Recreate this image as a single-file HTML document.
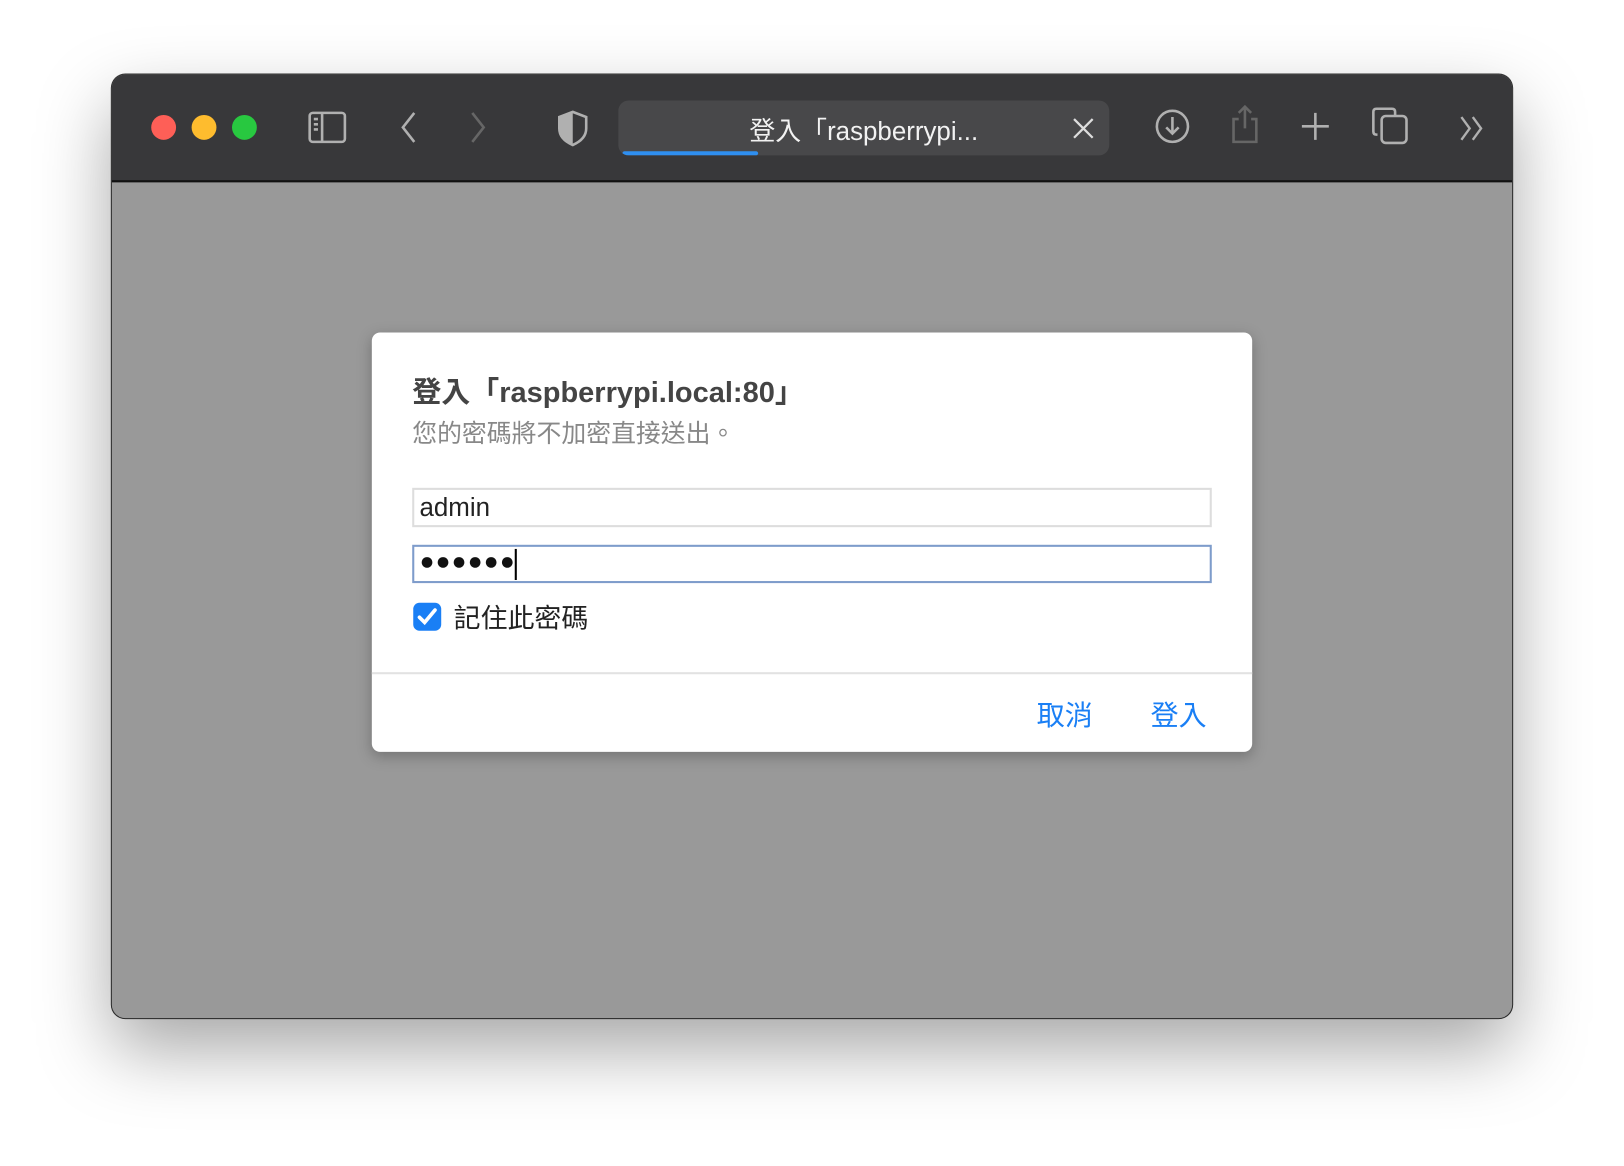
<!DOCTYPE html>
<html><head><meta charset="utf-8"><style>
html,body{margin:0;padding:0;width:1624px;height:1166px;overflow:hidden;background:#fff;}
#w{position:absolute;left:0;top:0;width:1568px;height:1126px;transform:scale(1.03571);transform-origin:0 0;font-family:"Liberation Sans","Noto Sans CJK TC",sans-serif;}
.win{position:absolute;left:108px;top:72px;width:1352px;height:911px;border-radius:13px;background:#999;overflow:hidden;box-shadow:0 30px 70px rgba(0,0,0,.35),0 0 0 1px #333;}
.tb{position:absolute;left:0;top:0;width:100%;height:102px;background:#38383a;border-bottom:2px solid #111;}
.dot{position:absolute;top:39px;width:24px;height:24px;border-radius:50%;}
.abs{position:absolute;}
.dlg{position:absolute;left:251px;top:249px;width:850px;height:405px;background:#fff;border-radius:8px;box-shadow:0 4px 14px rgba(0,0,0,.25);}
.inp{position:absolute;left:39px;width:768px;background:#fff;}
</style></head><body><div id="w">
<div class="win">
<div class="tb">
<div class="dot" style="left:38px;background:#fe5f57"></div>
<div class="dot" style="left:77px;background:#febc2e"></div>
<div class="dot" style="left:116px;background:#28c840"></div>
<svg class="abs" style="left:188px;top:34px" width="40" height="34" viewBox="0 0 40 34" fill="none" stroke="#b0b0b0" stroke-width="2.5"><rect x="3" y="3" width="34" height="28" rx="3"/><line x1="15" y1="3" x2="15" y2="31"/><line x1="7" y1="9" x2="11" y2="9"/><line x1="7" y1="14" x2="11" y2="14"/><line x1="7" y1="19" x2="11" y2="19"/></svg>
<svg class="abs" style="left:272px;top:34px" width="30" height="34" fill="none" stroke="#b0b0b0" stroke-width="2.5"><path d="M20 3 L9 17 L20 31"/></svg>
<svg class="abs" style="left:338px;top:34px" width="30" height="34" fill="none" stroke="#666" stroke-width="2.5"><path d="M10 3 L21 17 L10 31"/></svg>
<svg class="abs" style="left:428px;top:34px" width="34" height="36" viewBox="0 0 34 36"><path d="M17 2 L30 7 V18 C30 26 24 31 17 34 C10 31 4 26 4 18 V7 Z" fill="none" stroke="#b0b0b0" stroke-width="2.5"/><path d="M17 2 L4 7 V18 C4 26 10 31 17 34 Z" fill="#b0b0b0"/></svg>
<div class="abs" style="left:489px;top:25px;width:474px;height:53px;background:#48484a;border-radius:10px;overflow:hidden">
<div class="abs" style="left:4px;bottom:0;width:131px;height:4px;background:#2f8ff0;border-radius:2px"></div>
<div class="abs" style="left:0;top:10px;width:474px;text-align:center;color:#f2f2f2;font-size:25px;">登入「raspberrypi...</div>
<svg class="abs" style="left:438px;top:16px" width="22" height="22" stroke="#ddd" stroke-width="2.2"><path d="M2 2L20 20M20 2L2 20"/></svg>
</div>
<svg class="abs" style="left:1006px;top:32px" width="36" height="36" fill="none" stroke="#b0b0b0" stroke-width="2.5"><circle cx="18" cy="18" r="15"/><path d="M18 9V25M12 19L18 25L24 19"/></svg>
<svg class="abs" style="left:1076px;top:28px" width="36" height="40" fill="none" stroke="#666" stroke-width="2.5"><path d="M18 3V24M12 9L18 3L24 9M12 15H7V37H29V15H24"/></svg>
<svg class="abs" style="left:1146px;top:34px" width="32" height="32" stroke="#b0b0b0" stroke-width="2.5"><path d="M16 3V29M3 16H29"/></svg>
<svg class="abs" style="left:1216px;top:30px" width="38" height="40" fill="none" stroke="#b0b0b0" stroke-width="2.5"><rect x="10" y="10" width="24" height="26" rx="4"/><path d="M6 28 H5 C3 28 2 27 2 25 V6 C2 4 3 3 5 3 H20 C22 3 23 4 23 6 V10"/></svg>
<svg class="abs" style="left:1300px;top:38px" width="30" height="28" fill="none" stroke="#b0b0b0" stroke-width="2.3"><path d="M3 3L11 14L3 25M14 3L22 14L14 25"/></svg>
</div>
<div class="dlg">
<div class="abs" style="left:39px;top:36px;font-size:28px;color:#444;font-weight:600;white-space:nowrap">登入「raspberrypi.local:80」</div>
<div class="abs" style="left:39px;top:78px;font-size:24px;color:#888;white-space:nowrap">您的密碼將不加密直接送出。</div>
<div class="inp" style="top:150px;height:34px;border:2px solid #ddd;"><span class="abs" style="left:5px;top:3px;font-size:25px;color:#222">admin</span></div>
<div class="inp" style="top:205px;height:33px;border:2px solid #7e9ccb;"><span class="abs" style="left:5px;top:1px;font-size:24px;color:#111;letter-spacing:1px">●●●●●●</span><span class="abs" style="left:97px;top:2px;width:2px;height:30px;background:#000"></span></div>
<div class="abs" style="left:40px;top:261px;width:27px;height:27px;border-radius:6px;background:#1a7ff5"><svg width="27" height="27" fill="none" stroke="#fff" stroke-width="3.5" stroke-linecap="round"><path d="M6 14L11 19L21 7"/></svg></div>
<div class="abs" style="left:79px;top:256px;font-size:26px;color:#222;white-space:nowrap">記住此密碼</div>
<div class="abs" style="left:0;top:328px;width:850px;height:2px;background:#e2e2e2"></div>
<div class="abs" style="left:642px;top:348px;font-size:27px;color:#1a7ff5">取消</div>
<div class="abs" style="left:752px;top:348px;font-size:27px;color:#1a7ff5">登入</div>
</div>
</div>
</div></body></html>
